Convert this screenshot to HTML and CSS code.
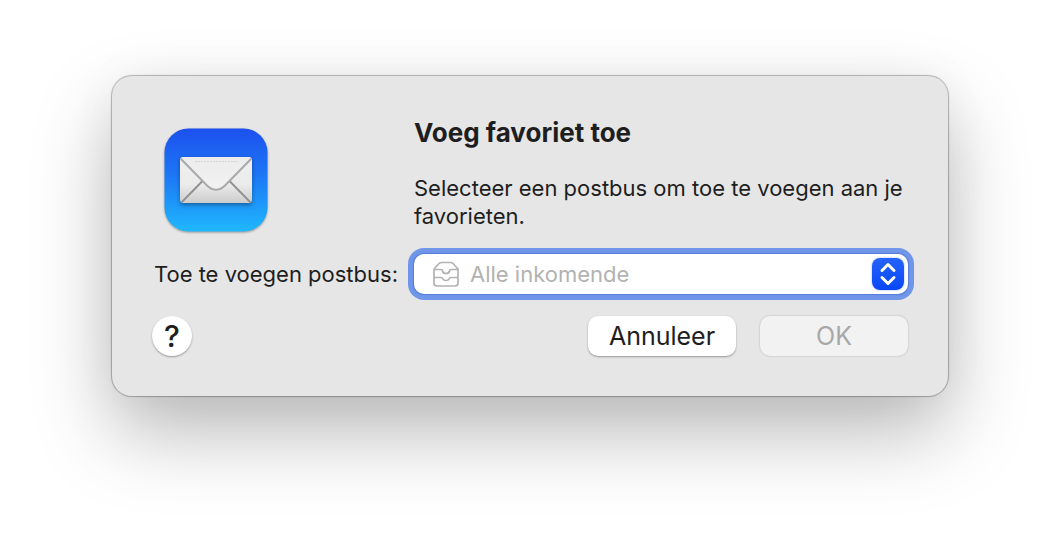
FILE: index.html
```html
<!DOCTYPE html>
<html lang="nl">
<head>
    <meta charset="UTF-8">
    <meta name="viewport" content="width=device-width, initial-scale=1.0">
    <title>Voeg favoriet toe</title>
    <link rel="stylesheet" href="styles.css">
</head>
<body>
    <form class="dialog" role="dialog" aria-labelledby="dialog-title">
        <div class="intro">
            <svg class="app-icon" viewBox="0 0 104 104" aria-hidden="true">
                <defs>
                    <linearGradient id="sky" x1="0" y1="0" x2="0" y2="1">
                        <stop offset="0" stop-color="#1d50ee"/>
                        <stop offset="0.5" stop-color="#1c7cf6"/>
                        <stop offset="1" stop-color="#1fb8fe"/>
                    </linearGradient>
                    <linearGradient id="paper" x1="0" y1="0" x2="0" y2="1">
                        <stop offset="0" stop-color="#f0f0f0"/>
                        <stop offset="0.6" stop-color="#ebebeb"/>
                        <stop offset="1" stop-color="#cccccc"/>
                    </linearGradient>
                    <linearGradient id="flap" x1="0" y1="0" x2="0" y2="1">
                        <stop offset="0" stop-color="#ebebeb"/>
                        <stop offset="1" stop-color="#f2f2f2"/>
                    </linearGradient>
                    <clipPath id="envelope">
                        <rect x="16" y="29" width="72" height="46" rx="3.500"/>
                    </clipPath>
                </defs>
                <rect x="0.5" y="0.5" width="103" height="103" rx="24" fill="url(#sky)"/>
                <rect class="envelope" x="16" y="29" width="72" height="46" rx="3.500" fill="url(#paper)"/>
                <g clip-path="url(#envelope)" fill="none">
                    <path d="M17 75 L39 52.500 M87 75 L65 52.500" stroke="#8e8e8e" stroke-width="1.8"/>
                    <path d="M16 30 L43 57.5 Q52 66 61 57.5 L88 30 V26 H16 Z" fill="url(#flap)" stroke="#a9a9a9" stroke-width="2"/>
                    <path d="M31 33.5 H74" stroke="#d5d5d5" stroke-dasharray="2 1"/>
                </g>
            </svg>
        </div>
        <div class="message">
            <h1 id="dialog-title">Voeg favoriet toe</h1>
            <p>Selecteer een postbus om toe te voegen aan je favorieten.</p>
        </div>

        <label class="field-label" for="mailbox">Toe te voegen postbus:</label>
        <div class="popup">
            <select id="mailbox">
                <option>Alle inkomende</option>
            </select>
            <svg class="tray" viewBox="0 0 28 28" aria-hidden="true">
                <path d="M2 9 V23 Q2 26 5 26 H23 Q26 26 26 23 V9 L21 3.500 Q20 2.500 18 2.500 H10 Q8 2.500 7 3.500 L2 9 M2 9.500 H9 Q10.500 9.500 10.500 11 Q11 13.500 14 13.500 Q17 13.500 17.500 11 Q17.500 9.500 19 9.500 H26 M2 17.500 H9 Q10.500 17.500 11 19 Q11.500 20.500 14 20.500 Q16.500 20.500 17 19 Q17.500 17.500 19 17.500 H26"/>
            </svg>
            <span class="stepper">
                <svg viewBox="0 0 32 32" aria-hidden="true">
                    <path d="M10 12.500 L16 6.500 L22 12.500 M10 19.500 L16 25.500 L22 19.500"/>
                </svg>
            </span>
        </div>

        <div class="actions">
            <button class="help" type="button">?</button>
            <button class="btn" type="button">Annuleer</button>
            <button class="btn" type="submit" disabled>OK</button>
        </div>
    </form>
</body>
</html>
```
FILE: styles.css
```css
* {
    margin: 0;
    padding: 0;
    box-sizing: border-box;
    font-family: Inter, "Liberation Sans", sans-serif;
}

body {
    min-height: 100vh;
    padding: 76px 24px;
    background: #fff;
    color: #1e1e1e;
    font-size: 22px;
    line-height: 28px;
}

.dialog {
    display: grid;
    grid-template-columns: 246px 1fr;
    column-gap: 16px;
    width: 100%;
    max-width: 836px;
    margin: 0 auto;
    padding: 40px;
    background: #e6e6e6;
    border-radius: 20px;
    box-shadow: 0 0 1px 1px rgba(0, 0, 0, 0.28),
        0 36px 80px rgba(0, 0, 0, 0.28),
        0 0 50px rgba(0, 0, 0, 0.04);
}

.intro {
    padding: 12px 12px 0;
}

.app-icon {
    display: block;
    width: 104px;
    height: 104px;
    filter: drop-shadow(0 1px 1px rgba(0, 0, 0, 0.35));
}

.envelope {
    filter: drop-shadow(0 2px 2px rgba(0, 0, 0, 0.35));
}

h1 {
    margin-bottom: 24px;
    font-size: 26px;
    font-weight: 700;
    line-height: 34px;
}

.field-label,
.popup {
    margin: 22px 0;
}

.field-label {
    align-self: center;
    text-align: right;
    white-space: nowrap;
}

.popup {
    position: relative;
}

.popup select {
    appearance: none;
    display: block;
    width: 100%;
    height: 40px;
    padding: 0 48px 0 56px;
    background: #fff;
    border: none;
    border-radius: 10px;
    outline: none;
    box-shadow: 0 0 1px 1px rgba(60, 100, 200, 0.5), 0 0 0 6px #7096ea;
    color: #b2b2b2;
    font-size: 22px;
}

.tray {
    position: absolute;
    left: 18px;
    top: 6px;
    width: 28px;
    height: 28px;
    fill: none;
    stroke: #b2b2b2;
    stroke-width: 1.7;
    pointer-events: none;
}

.stepper {
    position: absolute;
    top: 4px;
    right: 4px;
    width: 32px;
    height: 32px;
    background: linear-gradient(#2563fb, #0846f5);
    border-radius: 8px;
    box-shadow: 0 0 2px rgba(8, 70, 245, 0.5);
    pointer-events: none;
}

.stepper svg {
    display: block;
    fill: none;
    stroke: #fff;
    stroke-width: 3;
    stroke-linecap: round;
    stroke-linejoin: round;
}

.actions {
    grid-column: 1 / -1;
    display: flex;
    gap: 24px;
}

.help {
    width: 40px;
    height: 40px;
    margin-right: auto;
    background: #fff;
    border: none;
    border-radius: 50%;
    box-shadow: 0 1px 2px rgba(0, 0, 0, 0.35);
    color: #1e1e1e;
    font-size: 30px;
    font-weight: 500;
}

.btn {
    width: 148px;
    height: 40px;
    background: #fff;
    border: none;
    border-radius: 10px;
    box-shadow: 0 1px 2px rgba(0, 0, 0, 0.35);
    color: #1e1e1e;
    font-size: 25px;
}

.btn:disabled {
    background: #f2f2f2;
    box-shadow: 0 0 2px rgba(0, 0, 0, 0.25);
    color: #a8a8a8;
}
```
